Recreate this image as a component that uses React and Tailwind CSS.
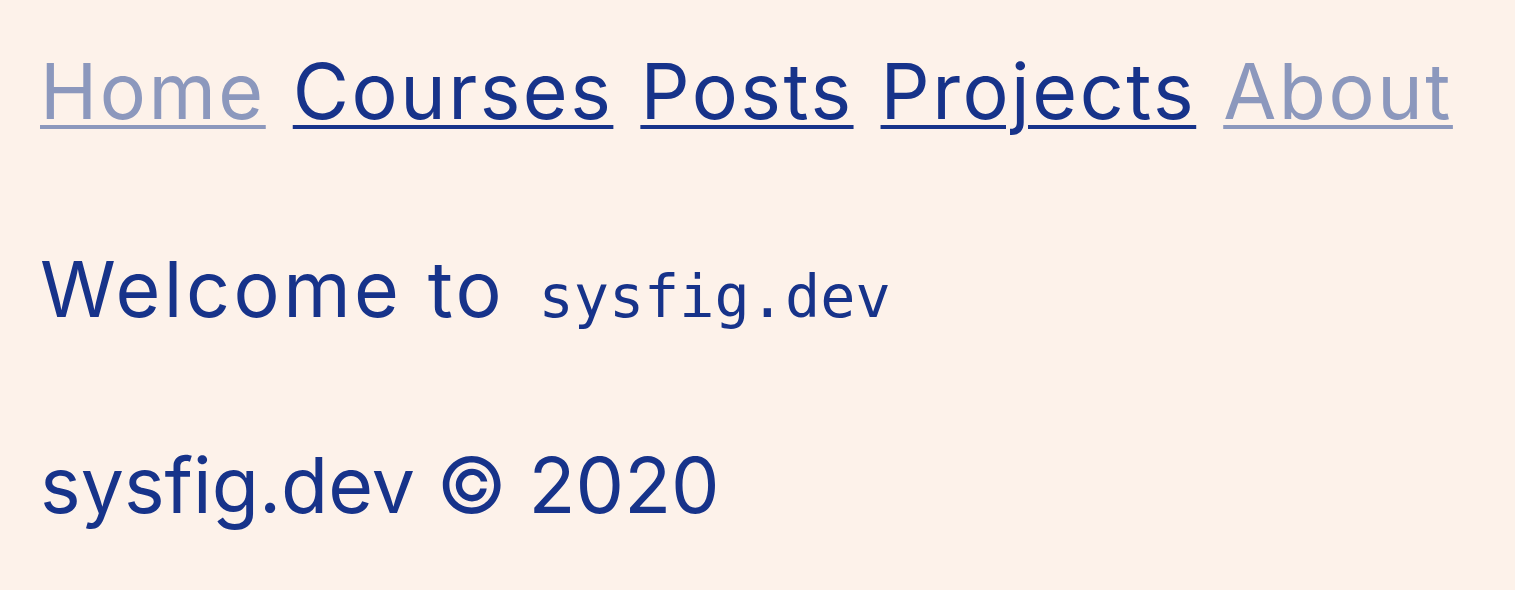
import React from 'react';

const links = [
    { label: 'Home', muted: true },
    { label: 'Courses' },
    { label: 'Posts' },
    { label: 'Projects' },
    { label: 'About', muted: true },
];

const App = () => {
    return (
        <div className="min-h-screen bg-[#fdf2ea] text-[#17338a] pl-[40px] pt-[43px] font-['Inter','Liberation_Sans',sans-serif] text-[77px] leading-[96px]">
            {/* Nav */}
            <nav className="flex gap-[27px] h-[96px] tracking-[2.5px]">
                {links.map((link) => (
                    <a
                        key={link.label}
                        href="#"
                        className={`underline decoration-[4px] underline-offset-[6px] ${link.muted ? 'text-[#8c98bd]' : 'text-[#17338a]'}`}
                    >
                        {link.label}
                    </a>
                ))}
            </nav>

            {/* Body */}
            <p className="mt-[102px] h-[96px]">
                <span className="tracking-[3.5px]">Welcome to </span>
                <code className="ml-[8px] font-['DejaVu_Sans_Mono','Liberation_Mono',monospace] text-[58.5px]">sysfig.dev</code>
            </p>

            {/* Footer */}
            <footer className="mt-[100px] h-[96px]">sysfig.dev © 2020</footer>
        </div>
    );
};

export default App;
